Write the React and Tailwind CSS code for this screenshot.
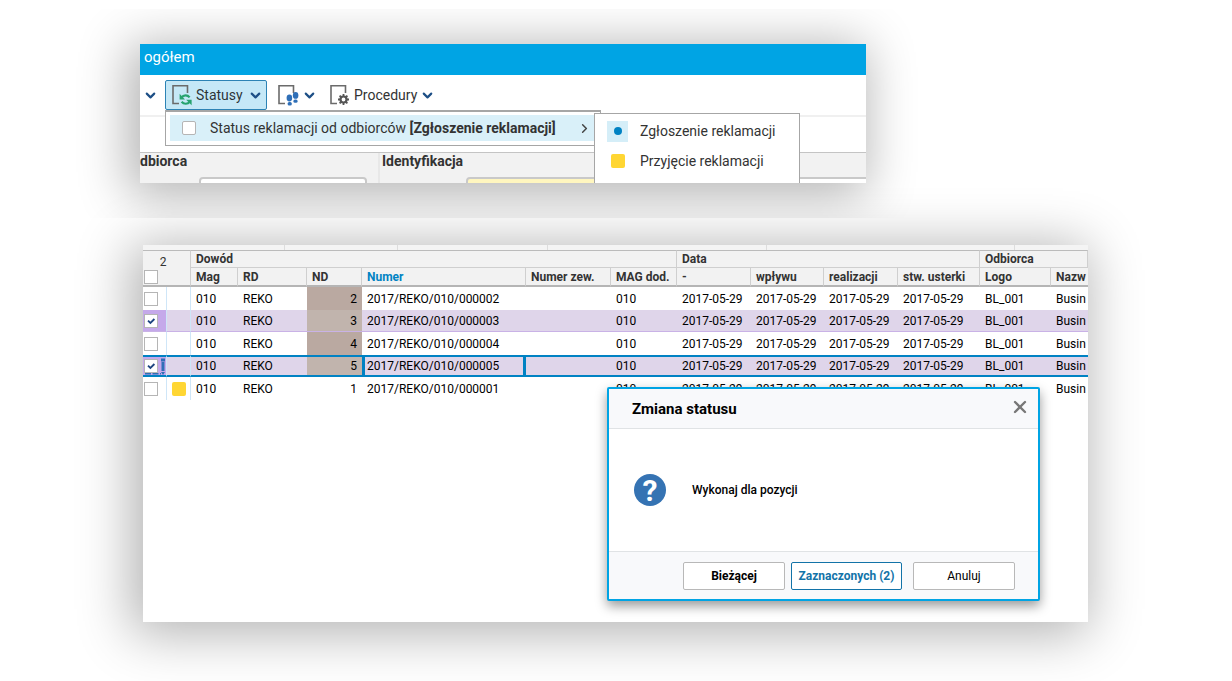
import React, { useState } from "react";
import { ChevronDown, ChevronRight, X } from "lucide-react";

const initialRows = [
  { id: 2, number: "2017/REKO/010/000002" },
  { id: 3, number: "2017/REKO/010/000003" },
  { id: 4, number: "2017/REKO/010/000004" },
  { id: 5, number: "2017/REKO/010/000005" },
  { id: 1, number: "2017/REKO/010/000001", status: true },
];

const columnWidths = [
  "w-[24px]",
  "w-[24px]",
  "w-[47px]",
  "w-[69px]",
  "w-[55px]",
  "w-[164px]",
  "w-[85px]",
  "w-[66px]",
  "w-[74px]",
  "w-[73px]",
  "w-[74px]",
  "w-[82px]",
  "w-[71px]",
  "w-[37px]",
];

const columns = ["Mag", "RD", "ND", "Numer", "Numer zew.", "MAG dod.", "-", "wpływu", "realizacji", "stw. usterki", "Logo", "Nazw"];

const panelShadow = "shadow-[-6px_6px_50px_6px_rgba(0,0,0,0.3)]";

function SheetIcon({ children }) {
  return (
    <svg width="22" height="22" viewBox="0 0 22 22" fill="none">
      <path d="M16.5 9V1.8H2V19.5H8" stroke="#6b6b6b" strokeWidth="1.6" />
      {children}
    </svg>
  );
}

function RefreshSheet() {
  return (
    <SheetIcon>
      <path d="M10.5 13.5C12.5 10.8 16.5 10.8 18.6 13.4" stroke="#27a36f" strokeWidth="2.2" />
      <path d="M8.6 9.8V15.4H14Z" fill="#27a36f" />
      <path d="M18.8 17.6C16.8 20.4 12.8 20.4 10.6 17.8" stroke="#27a36f" strokeWidth="2.2" />
      <path d="M20.6 21.2V15.8H15.2Z" fill="#27a36f" />
    </SheetIcon>
  );
}

function StepsSheet() {
  return (
    <SheetIcon>
      <ellipse cx="12.4" cy="14" rx="2.8" ry="3.4" fill="#2f6fb7" />
      <rect x="10.6" y="18" width="4.2" height="3.6" rx="1.6" fill="#2f6fb7" />
      <ellipse cx="18.6" cy="11.4" rx="2.8" ry="3.4" fill="#2f6fb7" />
      <rect x="16.4" y="15.4" width="4.2" height="3.4" rx="1.6" fill="#2f6fb7" />
    </SheetIcon>
  );
}

function GearSheet() {
  return (
    <SheetIcon>
      <circle cx="14.5" cy="15.5" r="3" stroke="#555" strokeWidth="2.2" />
      <path
        d="M14.5 10v2M14.5 19v2M9 15.5h2M18 15.5h2M10.6 11.6l1.4 1.4M17 18l1.4 1.4M18.4 11.6L17 13M12 18l-1.4 1.4"
        stroke="#555"
        strokeWidth="1.8"
      />
    </SheetIcon>
  );
}

function Caret() {
  return <ChevronDown size={15} strokeWidth={3.4} className="text-[#1d4f86]" />;
}

function GridCheckbox({ checked, onChange, label }) {
  return (
    <span className="relative ml-px block size-[14px]">
      <input
        type="checkbox"
        aria-label={label}
        checked={checked}
        onChange={onChange}
        className="block size-[14px] appearance-none border border-[#b5b5b5] bg-white"
      />
      {checked && (
        <svg className="pointer-events-none absolute inset-0" width="14" height="14" viewBox="0 0 14 14" fill="none">
          <path d="M4 6.6L6.4 9L10.4 5" stroke="#1d4480" strokeWidth="1.8" />
        </svg>
      )}
    </span>
  );
}

function StatusPanel() {
  const [bulk, setBulk] = useState(false);

  return (
    <div className={`ml-[140px] h-[139px] w-full max-w-[726px] bg-white ${panelShadow}`}>
      <div className="relative h-full overflow-hidden text-[14px] text-[#333]">
        <div className="h-[31px] bg-[#00a4e4] px-1 text-[15px] leading-[26px] text-white">ogółem</div>

        <div className="flex h-[42px] items-center border-b-2 border-[#f0f0f0] pl-[3px]">
          <button type="button" aria-label="Więcej" className="mr-[7px]">
            <Caret />
          </button>

          <div className="relative">
            <button
              type="button"
              className="flex h-[30px] w-[102px] items-center rounded-xs border border-[#2c83b5] bg-[#c5e8f7] pl-[5px] text-black/80"
            >
              <RefreshSheet />
              <span className="ml-[3px] w-[52px] text-left">Statusy</span>
              <Caret />
            </button>

            {/* Rozwinięte menu */}
            <div className="absolute top-full left-0 z-10 w-[436px] border border-t-2 border-[#a6a6a6] bg-white pt-[3px] pb-1 pl-1">
              <label className="flex h-[26px] items-center bg-[#d9f0f9] pl-3">
                <input
                  type="checkbox"
                  checked={bulk}
                  onChange={(e) => setBulk(e.target.checked)}
                  className="size-[14px] appearance-none rounded-xs border border-[#b5b5b5] bg-white checked:bg-[#0082c3]"
                />
                <span className="ml-[14px] whitespace-nowrap">
                  Status reklamacji od odbiorców <b>[Zgłoszenie reklamacji]</b>
                </span>
                <ChevronRight size={15} strokeWidth={2.4} className="mr-2 ml-auto text-[#444]" />
              </label>

              <div className="absolute top-px left-[428px] flex w-[206px] flex-col border border-[#a6a6a6] bg-white pt-[2px] pb-3 pl-3">
                <button type="button" className="flex h-[30px] items-center gap-3">
                  <span className="flex size-[21px] items-center justify-center bg-[#d5eef8]">
                    <span className="size-2 rounded-full bg-[#0082c3]" />
                  </span>
                  Zgłoszenie reklamacji
                </button>
                <button type="button" className="flex h-[30px] items-center gap-3">
                  <span className="flex size-[21px] items-center justify-center">
                    <span className="size-[14px] rounded-xs bg-[#ffd633]" />
                  </span>
                  Przyjęcie reklamacji
                </button>
              </div>
            </div>
          </div>

          <button type="button" aria-label="Kroki" className="ml-[10px] flex items-center gap-[3px]">
            <StepsSheet />
            <Caret />
          </button>
          <button type="button" className="ml-3 flex items-center">
            <GearSheet />
            <span className="mr-[3px] ml-[3px]">Procedury</span>
            <Caret />
          </button>
        </div>

        <div className="mt-[35px] flex h-[31px] border-t border-[#c4c4c4] bg-[#f2f2f2] font-bold leading-[17px]">
          <div className="w-[240px] border-r-2 border-[#e8e8e8]">
            <label htmlFor="buyer">dbiorca</label>
            <input id="buyer" className="mt-[7px] ml-[59px] block h-6 w-[168px] rounded-sm border-2 border-[#c9c9c9] bg-white" />
          </div>
          <div className="flex-1 pl-[2px]">
            <label htmlFor="ident">Identyfikacja</label>
            <div className="mt-[7px] flex">
              <input id="ident" className="ml-[84px] block h-6 w-[160px] rounded-sm border-2 border-[#c9c9c9] bg-[#fff6bf]" />
              <input aria-label="Opis" className="block h-6 w-0 flex-1 border-2 border-r-0 border-[#c9c9c9] bg-white" />
            </div>
          </div>
        </div>
      </div>
    </div>
  );
}

function GridRow({ row, checked, current, onToggle }) {
  const cell = current
    ? "border-y-2 border-[#0082c3] px-[5px]"
    : checked
      ? "border-b border-[#c9b2e6] px-[5px]"
      : "px-[5px]";
  const edge = current ? "border-y-2 border-y-[#0082c3]" : checked ? "border-b border-b-[#c9b2e6]" : "";
  const ndColor = row.status ? "" : checked ? "bg-[#c1b4ad]" : "bg-[#baa9a1]";

  return (
    <tr className={checked ? "h-[22px] bg-[#dfd5ea]" : "h-[23px]"}>
      <td className={`relative border-r border-r-[#cfe6f8] ${edge} ${checked ? "bg-[#c5a9ea]" : ""}`}>
        <GridCheckbox checked={checked} onChange={onToggle} label={row.number} />
        {current && (
          <svg className="pointer-events-none absolute top-0 left-0" width="24" height="18" viewBox="0 0 24 18">
            <path d="M18 3h4M20 5v9" stroke="#2f6fb7" strokeWidth="3" />
            <path d="M2 16.8h16" stroke="#2f6fb7" strokeWidth="1.4" strokeDasharray="6 1.5" />
            <path d="M18 15h4l-2 3z" fill="#2f6fb7" />
          </svg>
        )}
      </td>
      <td className={`border-r border-r-[#cfe6f8] ${edge}`}>
        {row.status && <span className="mx-auto block size-[14px] rounded-xs bg-[#ffd633]" />}
      </td>
      <td className={cell}>010</td>
      <td className={cell}>REKO</td>
      <td className={`text-right ${cell} ${ndColor}`}>{row.id}</td>
      <td className={current ? "border-x-3 border-y-2 border-[#0082c3] px-[2px]" : cell}>{row.number}</td>
      <td className={cell}></td>
      <td className={cell}>010</td>
      <td className={cell}>2017-05-29</td>
      <td className={cell}>2017-05-29</td>
      <td className={cell}>2017-05-29</td>
      <td className={cell}>2017-05-29</td>
      <td className={cell}>BL_001</td>
      <td className={cell}>Busin</td>
    </tr>
  );
}

function StatusDialog({ count, onClose }) {
  const button = "h-7 w-[102px] rounded-xs border bg-white text-[12px]";

  return (
    <div
      role="dialog"
      aria-label="Zmiana statusu"
      className="absolute top-[142px] left-[464px] w-[433px] rounded-xs border-2 border-[#00a4e4] bg-white text-black shadow-[0_5px_12px_rgba(0,0,0,0.4)]"
    >
      <div className="flex h-10 items-center justify-between border-b border-[#e0e3e5] bg-[#f8f9fb] pr-2 pl-[23px]">
        <h2 className="text-[15px] leading-6 font-bold">Zmiana statusu</h2>
        <button type="button" aria-label="Zamknij" onClick={onClose} className="pb-[3px] text-[#777]">
          <X size={20} strokeWidth={2.8} />
        </button>
      </div>
      <div className="flex h-[122px] items-center pl-[25px]">
        <div className="flex size-8 items-center justify-center rounded-full bg-[#3573b3] text-[30px] font-bold text-white">?</div>
        <p className="ml-[26px] text-[12px] font-medium">Wykonaj dla pozycji</p>
      </div>
      <div className="flex h-12 items-center justify-end border-t border-[#e0e3e5] bg-[#f8f9fb] pr-[23px]">
        <button type="button" className={`${button} border-[#b8b8b8] font-bold`}>
          Bieżącej
        </button>
        <button
          type="button"
          className="ml-[6px] h-7 w-[111px] rounded-xs border border-[#1273a8] bg-white text-[12px] font-bold text-[#1273a8]"
        >
          Zaznaczonych ({count})
        </button>
        <button type="button" onClick={onClose} className={`${button} ml-[11px] border-[#b8b8b8]`}>
          Anuluj
        </button>
      </div>
    </div>
  );
}

function ComplaintsPanel() {
  const [selected, setSelected] = useState([3, 5]);
  const [open, setOpen] = useState(true);

  function toggle(id) {
    setSelected((prev) => (prev.includes(id) ? prev.filter((x) => x !== id) : [...prev, id]));
  }

  function toggleAll(e) {
    setSelected(e.target.checked ? initialRows.map((r) => r.id) : []);
  }

  const head = "border-t border-r border-b border-[#cfcfcf] border-t-[#bbb] px-[5px] font-bold";

  return (
    <div className={`ml-[143px] w-full max-w-[945px] bg-white ${panelShadow}`}>
      <div className="relative min-h-[377px] overflow-hidden">
        <div className="flex h-[5px] bg-[#f4f4f4]">
          <div className="w-[142px] border-r border-[#ddd]" />
          <div className="w-[113px] border-r border-[#ddd]" />
          <div className="w-[150px] border-r border-[#ddd]" />
          <div className="w-[219px] border-r border-[#ddd]" />
          <div className="w-[248px] border-r border-[#ddd]" />
        </div>

        <table className="w-full table-fixed border-separate border-spacing-0 text-left text-[12px] leading-[16px] whitespace-nowrap text-black [&_td]:py-0 [&_th]:py-0">
          <colgroup>
            {columnWidths.map((w, i) => (
              <col key={i} className={w} />
            ))}
          </colgroup>
          <thead className="bg-[#f2f2f2] text-[#333]">
            <tr className="h-[18px]">
              <th
                rowSpan={2}
                colSpan={2}
                className="border-t border-r border-b-2 border-[#cfcfcf] border-t-[#bbb] border-b-[#b5b5b5] align-bottom font-normal"
              >
                <div className="pr-[7px] text-center">{selected.length}</div>
                <div className="pb-px">
                  <GridCheckbox checked={selected.length === initialRows.length} onChange={toggleAll} label="Zaznacz wszystkie" />
                </div>
              </th>
              <th colSpan={6} className={head}>Dowód</th>
              <th colSpan={4} className={head}>Data</th>
              <th colSpan={2} className={head}>Odbiorca</th>
            </tr>
            <tr className="h-[19px]">
              {columns.map((name) => (
                <th
                  key={name}
                  className={`border-r border-b-2 border-[#cfcfcf] border-b-[#b5b5b5] px-[5px] font-bold last:border-r-0 ${name === "Numer" ? "text-[#0082c3]" : ""}`}
                >
                  {name}
                </th>
              ))}
            </tr>
          </thead>
          <tbody>
            {initialRows.map((row) => (
              <GridRow
                key={row.id}
                row={row}
                checked={selected.includes(row.id)}
                current={row.id === 5}
                onToggle={() => toggle(row.id)}
              />
            ))}
          </tbody>
        </table>

        {open && <StatusDialog count={selected.length} onClose={() => setOpen(false)} />}
      </div>
    </div>
  );
}

export default function App() {
  return (
    <main className="min-h-screen overflow-hidden bg-white pt-[9px] font-[Roboto,sans-serif]">
      <section className="overflow-hidden py-[35px]">
        <StatusPanel />
      </section>
      <section className="pt-[27px] pb-[59px]">
        <ComplaintsPanel />
      </section>
    </main>
  );
}
